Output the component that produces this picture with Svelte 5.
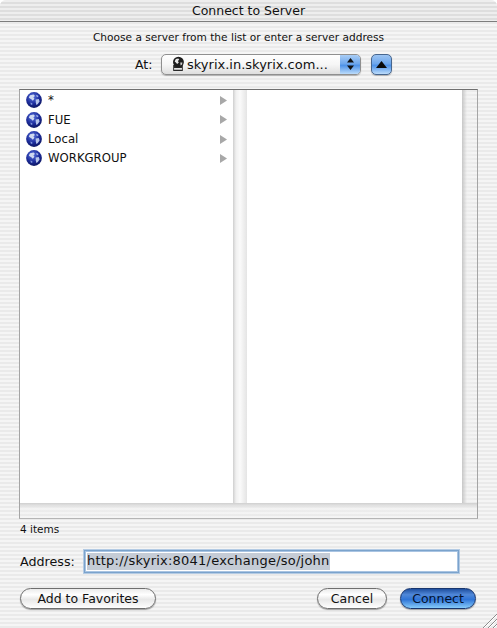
<script>
  const items = ['*', 'FUE', 'Local', 'WORKGROUP'];
</script>

{#snippet globe()}
  <svg class="globe" viewBox="0 0 16 16" aria-hidden="true">
    <defs>
      <radialGradient id="sea" cx="0.42" cy="0.32" r="0.75">
        <stop offset="0" stop-color="#5f78e0" />
        <stop offset="0.55" stop-color="#1c2c9c" />
        <stop offset="1" stop-color="#0a1256" />
      </radialGradient>
    </defs>
    <circle cx="8" cy="8" r="7.9" fill="url(#sea)" />
    <path d="M4 3.2 7.6 2.4 9 4 7.4 5.2 8.4 6.8 6.8 8.8 5.6 7.6 4 6.6 2.8 5.4Z" fill="#cfd9f0" />
    <path d="M9.6 7.4 12.8 7 13.6 9.4 11.8 12 10.4 13 9.8 10.4Z" fill="#b6c4ea" />
    <path d="M10.4 2.8 12.6 4 11.6 5.2 10.2 4.2Z" fill="#9fb0e6" />
    <path d="M4.4 10.6 6.4 11.2 6.2 13 4.8 12.4Z" fill="#7f94da" />
  </svg>
{/snippet}

<div class="win">
  <header class="title">Connect to Server</header>

  <p class="prompt">Choose a server from the list or enter a server address</p>

  <div class="at-row">
    <span class="at">At:</span>
    <div class="popup">
      <svg class="disk" viewBox="0 0 16 18" aria-hidden="true">
        <path d="M2.5 10h11v7h-11z" fill="#2a2a2a" />
        <path d="M3.5 13.5h9v2h-9z" fill="#e4e4e4" />
        <circle cx="8.5" cy="6.8" r="6.2" fill="#1e1e1e" />
        <path d="M5.5 3.2 8.4 2.6 9.4 4 7.8 5.6 9 7.4 7 9 5.6 7.4 4.2 6Z" fill="#e8e8e8" />
        <path d="M10.6 7.4 13 7.2 12.6 9.6 11 10.6Z" fill="#cfcfcf" />
      </svg>
      <span class="popup-text">skyrix.in.skyrix.com...</span>
      <span class="popup-cap">
        <svg viewBox="0 0 9 14" width="9" height="14" aria-hidden="true">
          <path d="M4.5 1 8 5.6H1Z M4.5 13 1 8.4H8Z" fill="#111" />
        </svg>
      </span>
    </div>
    <button class="up" aria-label="Up">
      <svg viewBox="0 0 11 7" width="11" height="7" aria-hidden="true"><path d="M5.5 0 11 7H0Z" fill="#0a0a0a" /></svg>
    </button>
  </div>

  <div class="browser">
    <div class="cols">
      <ul class="col">
        {#each items as it}
          <li>
            {@render globe()}
            <span class="name">{it}</span>
            <svg class="arrow" viewBox="0 0 7 9" width="7" height="9" aria-hidden="true"><path d="M0 0 7 4.5 0 9Z" fill="#a8a8a8" /></svg>
          </li>
        {/each}
      </ul>
      <div class="divider"></div>
      <div class="col2"></div>
      <div class="vtrack"></div>
    </div>
    <div class="htrack"></div>
  </div>

  <div class="status">4 items</div>

  <div class="addr-row">
    <label for="addr">Address:</label>
    <div class="field" id="addr"><span class="sel">http://skyrix:8041/exchange/so/john</span></div>
  </div>

  <div class="actions">
    <button class="pill fav">Add to Favorites</button>
    <span class="spacer"></span>
    <button class="pill cancel">Cancel</button>
    <button class="pill connect">Connect</button>
  </div>

  <svg class="grip" viewBox="0 0 14 14" width="14" height="14" aria-hidden="true">
    <path d="M0 14 14 0" stroke="#8c8c8c" />
    <path d="M1 14 14 1" stroke="#fff" />
    <path d="M5 14 14 5" stroke="#8c8c8c" />
    <path d="M6 14 14 6" stroke="#fff" />
    <path d="M10 14 14 10" stroke="#8c8c8c" />
    <path d="M11 14 14 11" stroke="#fff" />
  </svg>
</div>

<style>
  :global(body) {
    margin: 0;
    background: #fff;
  }
  .win {
    position: relative;
    box-sizing: border-box;
    width: 497px;
    height: 628px;
    overflow: hidden;
    border-radius: 6px 6px 0 0;
    font-family: "DejaVu Sans", sans-serif;
    font-size: 12px;
    color: #111;
    background: repeating-linear-gradient(to bottom, #f5f5f5 0 2px, #eaeaea 2px 4px);
  }
  .title {
    height: 21px;
    line-height: 21px;
    text-align: center;
    font-size: 12.5px;
    border-bottom: 1px solid #7d7d7d;
    background: repeating-linear-gradient(to bottom, #eeeeee 0 2px, #dedede 2px 4px);
  }
  .prompt {
    margin: 8px 20px 0 0;
    height: 14px;
    line-height: 14px;
    text-align: center;
    font-size: 10.6px;
  }
  .at-row {
    display: flex;
    align-items: center;
    margin-top: 9px;
    height: 22px;
    padding-left: 135px;
  }
  .at {
    width: 26px;
    font-size: 12.5px;
  }
  .popup {
    box-sizing: border-box;
    display: flex;
    align-items: center;
    width: 200px;
    height: 21px;
    border: 1px solid #8f8f8f;
    border-radius: 5px;
    background: linear-gradient(to bottom, #fefefe 0%, #f6f6f6 50%, #dedede 100%);
    box-shadow: 0 1px 1px rgba(0, 0, 0, 0.25);
    overflow: hidden;
  }
  .disk {
    width: 14px;
    height: 16px;
    margin-left: 9px;
    flex: none;
  }
  .popup-text {
    flex: 1;
    margin-left: 2px;
    font-size: 13px;
    white-space: nowrap;
  }
  .popup-cap {
    display: flex;
    align-items: center;
    justify-content: center;
    width: 20px;
    height: 100%;
    background: linear-gradient(to bottom, #a9cdf5 0%, #6ea7ec 45%, #4f93e8 55%, #bcdcfb 100%);
  }
  .up {
    box-sizing: border-box;
    display: flex;
    align-items: center;
    justify-content: center;
    width: 21px;
    height: 21px;
    margin-left: 10px;
    padding: 0;
    border: 1px solid #47668e;
    border-radius: 5px;
    background: linear-gradient(to bottom, #9cc4f2 0%, #6ea7ec 45%, #4f93e8 55%, #bcdcfb 100%);
    box-shadow: 0 1px 1px rgba(0, 0, 0, 0.25);
  }
  .browser {
    box-sizing: border-box;
    display: flex;
    flex-direction: column;
    width: 459px;
    height: 430px;
    margin: 14px 0 0 19px;
    border: 1px solid #a5a5a5;
    border-top-color: #707070;
    border-bottom-color: #b5b5b5;
  }
  .cols {
    display: flex;
    flex: 1;
    min-height: 0;
  }
  .col {
    width: 213px;
    margin: 0;
    padding: 0.8px 0 0;
    list-style: none;
    background: #fff;
  }
  .col li {
    display: flex;
    align-items: center;
    height: 19.3px;
    padding-left: 6px;
    font-size: 11.7px;
  }
  .globe {
    width: 16px;
    height: 16px;
    flex: none;
  }
  .name {
    flex: 1;
    margin-left: 6px;
  }
  .arrow {
    margin-right: 6px;
  }
  .divider {
    width: 14px;
    background: linear-gradient(to right, #cfcfcf 0, #f0f0f0 3px, #fafafa 50%, #e4e4e4 100%);
  }
  .col2 {
    flex: 1;
    background: #fff;
  }
  .vtrack {
    width: 15px;
    background: linear-gradient(to right, rgba(195, 195, 195, 0.9) 0, rgba(240, 240, 240, 0.5) 5px, rgba(255, 255, 255, 0) 100%);
  }
  .htrack {
    height: 15px;
    background: linear-gradient(to bottom, rgba(205, 205, 205, 0.9) 0, rgba(240, 240, 240, 0.6) 5px, rgba(255, 255, 255, 0) 100%);
  }
  .status {
    height: 14px;
    line-height: 14px;
    margin: 3px 0 0 20px;
    font-size: 10.5px;
  }
  .addr-row {
    display: flex;
    align-items: center;
    margin-top: 13px;
    height: 24px;
    padding-left: 20px;
  }
  .addr-row label {
    width: 64px;
    font-size: 12.7px;
  }
  .field {
    box-sizing: border-box;
    width: 375px;
    height: 23px;
    padding: 2px 0 0 2px;
    border: 1px solid #7ba3cc;
    background: #fff;
    box-shadow: 0 0 0 1px #b4cbe4, inset 0 0 0 1px #a9c4e2;
    font-size: 13px;
    letter-spacing: 0.23px;
    line-height: 16px;
    white-space: nowrap;
  }
  .sel {
    display: inline-block;
    background: #c5ccd6;
    height: 17px;
  }
  .actions {
    display: flex;
    align-items: center;
    margin-top: 15px;
    padding: 0 21px 0 20px;
  }
  .spacer {
    flex: 1;
  }
  .pill {
    box-sizing: border-box;
    height: 21px;
    padding: 0;
    border: 1px solid #6e6e6e;
    border-radius: 11px;
    font-family: inherit;
    font-size: 12.5px;
    color: #111;
    background: linear-gradient(to bottom, #ebebeb 0%, #ffffff 30%, #e8e8e8 55%, #fefefe 100%);
    box-shadow: 0 1px 1px rgba(0, 0, 0, 0.35);
  }
  .fav {
    width: 136px;
  }
  .cancel {
    width: 70px;
  }
  .connect {
    width: 76px;
    margin-left: 13px;
    border-color: #17356e;
    color: #04122e;
    background: linear-gradient(to bottom, #1f4f9f 0%, #5088d8 30%, #2f74d6 55%, #86cbfa 100%);
  }
  .grip {
    position: absolute;
    right: 0;
    bottom: 0;
  }
</style>
